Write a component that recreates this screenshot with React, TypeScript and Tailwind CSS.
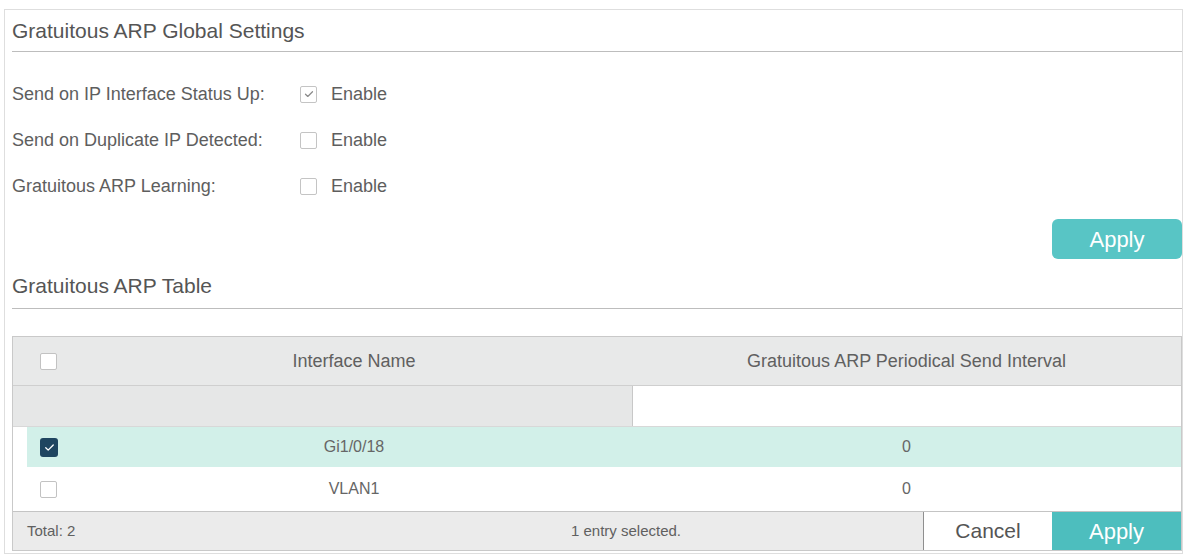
import React from 'react';

const font = { fontFamily: '"Liberation Sans", Arial, sans-serif' };

const Check = ({ className }: { className: string }) => (
  <svg viewBox="0 0 16 16" className={className} fill="none">
    <path d="M4 8.3l2.6 2.5L12 5.4" stroke="currentColor" strokeWidth="1.4" strokeLinecap="round" strokeLinejoin="round" />
  </svg>
);

const Box = ({ checked }: { checked?: boolean }) => (
  <div className="w-[17px] h-[17px] border border-[#c4c4c4] rounded-[2px] bg-white flex items-center justify-center">
    {checked && <Check className="w-[14px] h-[14px] text-[#8a8a8a]" />}
  </div>
);

const TableBox = ({ checked }: { checked?: boolean }) =>
  checked ? (
    <div className="w-[18px] h-[19px] rounded-[3px] bg-[#1f4560] flex items-center justify-center">
      <Check className="w-[15px] h-[15px] text-white" />
    </div>
  ) : (
    <div className="w-[17px] h-[17px] border border-[#c2c2c2] rounded-[2px] bg-white" />
  );

const SettingRow = ({ label, checked }: { label: string; checked?: boolean }) => (
  <div className="h-[46px] flex items-center">
    <span className="w-[288px] text-[18px] text-[#5e5e5e]">{label}</span>
    <Box checked={checked} />
    <span className="ml-[14px] text-[18px] text-[#5e5e5e]">Enable</span>
  </div>
);

export default function App() {
  return (
    <div className="w-[1190px] h-[556px] bg-white pt-[9px] pl-[4px]" style={font}>
      <div className="w-[1179px] h-[545px] border border-[#dedede] pl-[7px]">
        {/* Global settings */}
        <div className="h-[42px] flex items-center border-b border-[#bdbdbd] text-[21px] text-[#555]">
          Gratuitous ARP Global Settings
        </div>
        <div className="pt-[19px]">
          <SettingRow label="Send on IP Interface Status Up:" checked />
          <SettingRow label="Send on Duplicate IP Detected:" />
          <SettingRow label="Gratuitous ARP Learning:" />
        </div>
        <div className="flex justify-end mt-[10px]">
          <button className="w-[130px] h-[40px] rounded-[6px] bg-[#58c5c5] text-white text-[22px]">Apply</button>
        </div>

        {/* Table */}
        <div className="h-[50px] pt-[5px] flex items-center border-b border-[#bdbdbd] text-[21px] text-[#555]">
          Gratuitous ARP Table
        </div>
        <div className="mt-[27px] border border-[#c9c9c9] text-[#666]">
          <div className="h-[48px] grid grid-cols-[63px_556px_1fr] bg-[#e8e9e9] text-[18px] text-[#606060]">
            <div className="flex items-center pl-[27px]">
              <TableBox />
            </div>
            <div className="flex items-center justify-center">Interface Name</div>
            <div className="flex items-center justify-center">Gratuitous ARP Periodical Send Interval</div>
          </div>
          <div className="h-[41px] flex border-t border-[#cfcfcf] bg-[#e6e7e7]">
            <div className="w-[619px]" />
            <div className="flex-1 bg-white border-l border-[#c8c8c8]" />
          </div>
          <div className="h-[41px] border-t border-[#d8d8d8] pl-[14px]">
            <div className="h-full bg-[#d2f0e9] grid grid-cols-[49px_556px_1fr] text-[16px]">
              <div className="flex items-center pl-[13px]">
                <TableBox checked />
              </div>
              <div className="flex items-center justify-center">Gi1/0/18</div>
              <div className="flex items-center justify-center">0</div>
            </div>
          </div>
          <div className="h-[44px] grid grid-cols-[63px_556px_1fr] text-[16px]">
            <div className="flex items-center pl-[27px]">
              <TableBox />
            </div>
            <div className="flex items-center justify-center">VLAN1</div>
            <div className="flex items-center justify-center">0</div>
          </div>
          <div className="h-[39px] flex border-t border-[#c4c4c4] bg-[#ebebeb] text-[15px] text-[#606060]">
            <div className="w-[316px] flex items-center pl-[14px]">Total: 2</div>
            <div className="flex-1 flex items-center justify-center">1 entry selected.</div>
            <button className="w-[129px] bg-white border-l border-[#8f8f8f] text-[21px] text-[#555]">Cancel</button>
            <button className="w-[129px] bg-[#4dbebe] text-white text-[22px]">Apply</button>
          </div>
        </div>
      </div>
    </div>
  );
}
